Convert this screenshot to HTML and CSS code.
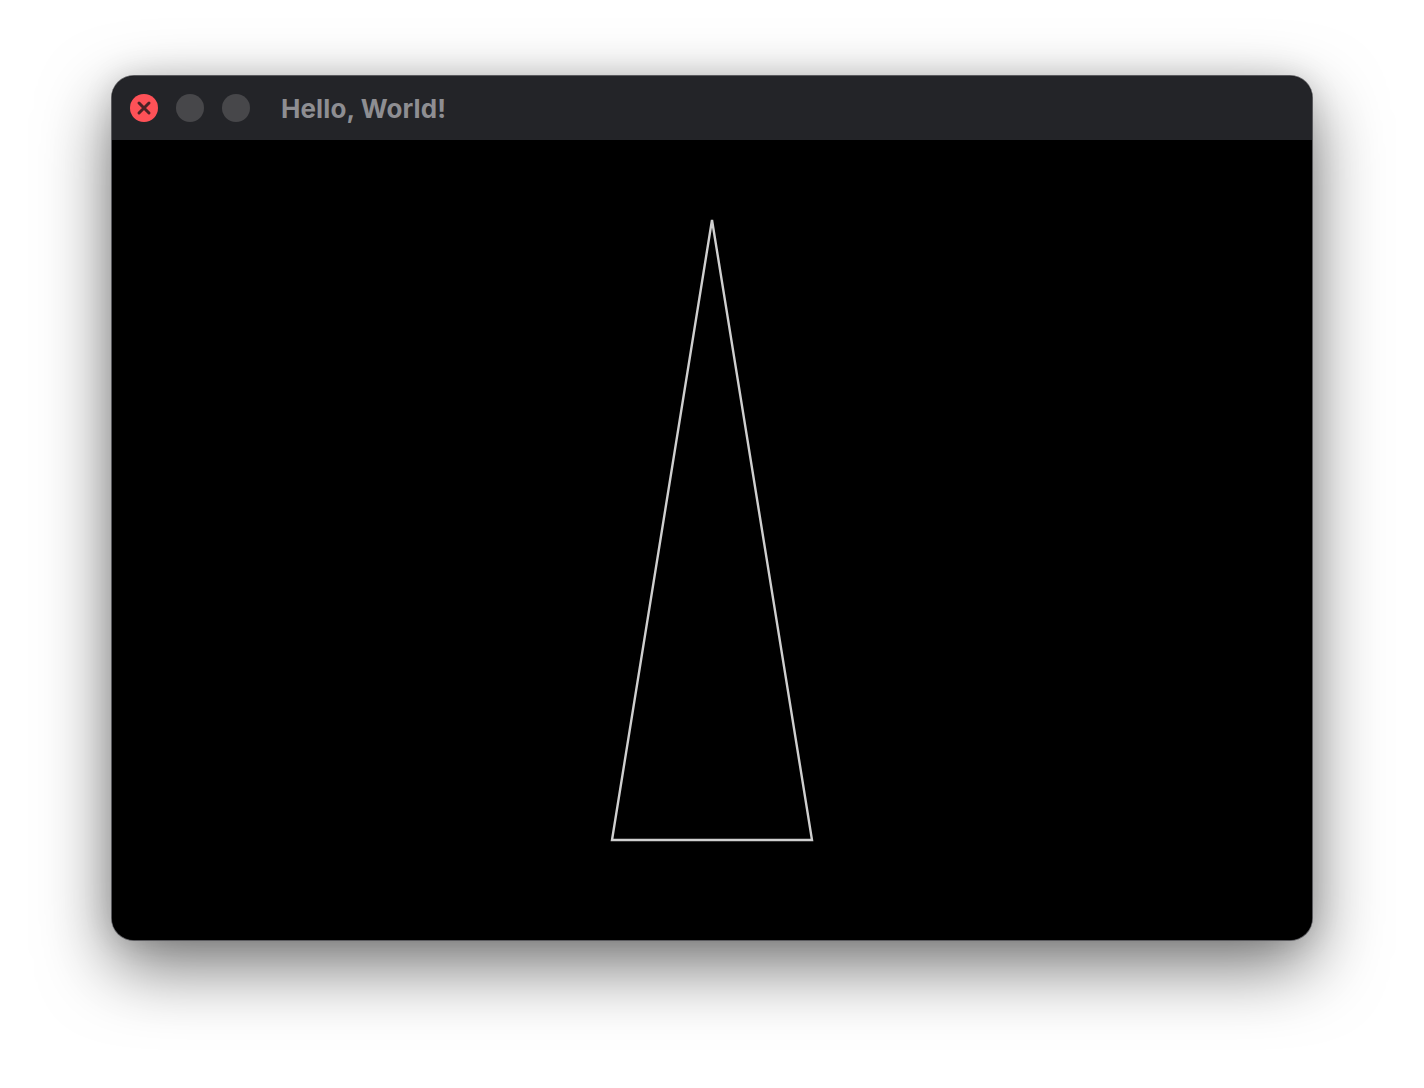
FILE: index.html
```html
<!DOCTYPE html>
<html>
<head>
<meta charset="utf-8">
<link rel="stylesheet" href="styles.css">
</head>
<body>
<div class="stage">
  <div class="window">
    <div class="titlebar">
      <div class="lights">
        <span class="light close">
          <svg viewBox="0 0 28 28" width="28" height="28"><path d="M9 9 L19 19 M19 9 L9 19" stroke="#4a2326" stroke-width="3" stroke-linecap="round"/></svg>
        </span>
        <span class="light"></span>
        <span class="light"></span>
      </div>
      <div class="title">Hello, World!</div>
    </div>
    <div class="content">
      <svg class="canvas" viewBox="0 0 1200 800" width="1200" height="800">
        <polygon points="600,80 500,700 700,700" fill="none" stroke="#cfcfcf" stroke-width="2.4"/>
      </svg>
    </div>
  </div>
</div>
</body>
</html>
```

FILE: styles.css
```css
html, body {
  margin: 0;
  padding: 0;
  background: #ffffff;
}
.stage {
  width: 1424px;
  height: 1088px;
  padding-top: 76px;
  box-sizing: border-box;
  display: flex;
  justify-content: center;
  align-items: flex-start;
}
.window {
  width: 1200px;
  height: 864px;
  border-radius: 22px;
  overflow: hidden;
  background: #000;
  box-shadow: 0 0 0 1px #5a5a5e, 0 26px 70px rgba(0,0,0,0.55), 0 0 30px rgba(0,0,0,0.12);
  display: flex;
  flex-direction: column;
}
.titlebar {
  height: 64px;
  background: #232428;
  display: flex;
  align-items: center;
  padding-left: 18px;
  box-sizing: border-box;
  flex: none;
}
.lights {
  display: flex;
  gap: 18px;
}
.light {
  width: 28px;
  height: 28px;
  border-radius: 50%;
  background: #47474a;
  display: block;
}
.light.close {
  background: #fe5157;
}
.light svg {
  display: block;
}
.title {
  margin-left: 31px;
  font-family: Inter, "Liberation Sans", sans-serif;
  font-weight: 700;
  font-size: 26px;
  color: #8e8e92;
  letter-spacing: 0.1px;
}
.content {
  flex: 1;
  background: #000;
}
.canvas {
  display: block;
}
```
